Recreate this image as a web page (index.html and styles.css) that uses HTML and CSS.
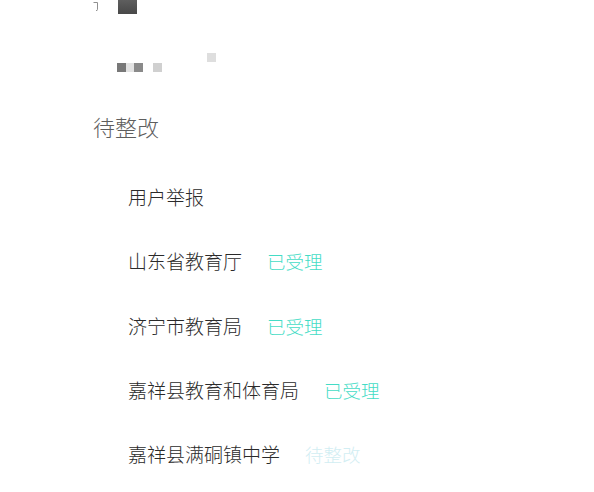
FILE: index.html
```html
<!DOCTYPE html>
<html lang="zh-CN">
<head>
<meta charset="utf-8">
<title>进度</title>
<link rel="stylesheet" href="styles.css">
</head>
<body>
<div class="page">
  <div class="head">
    <div class="head-row1">
      <svg class="cut-mark" width="8" height="12" viewBox="0 0 8 12" aria-hidden="true">
        <path d="M1.5 2.5 H5.5 V9.5 Q5.5 10.8 4 10.5" fill="none" stroke="#8f8f8f" stroke-width="1"/>
      </svg>
      <span class="mosaic m-dark"></span>
    </div>
    <div class="head-row2">
      <span class="mosaic m-a"></span>
      <span class="mosaic m-b"></span>
      <span class="mosaic m-c"></span>
      <span class="mosaic m-d"></span>
      <span class="mosaic m-e"></span>
    </div>
  </div>
  <div class="title">待整改</div>
  <ul class="list">
    <li class="item"><span class="org">用户举报</span></li>
    <li class="item"><span class="org">山东省教育厅</span><span class="status done">已受理</span></li>
    <li class="item"><span class="org">济宁市教育局</span><span class="status done">已受理</span></li>
    <li class="item"><span class="org">嘉祥县教育和体育局</span><span class="status done">已受理</span></li>
    <li class="item"><span class="org">嘉祥县满硐镇中学</span><span class="status todo">待整改</span></li>
  </ul>
</div>
</body>
</html>
```
FILE: styles.css
```css
html, body {
  margin: 0;
  padding: 0;
  background: #ffffff;
}
body {
  font-family: "Noto Sans CJK SC", "Noto Sans", sans-serif;
  font-weight: 300;
  color: #333333;
}
.page {
  width: 594px;
  height: 492px;
  overflow: hidden;
}
.head {
  height: 111px;
  display: flex;
  flex-direction: column;
}
.head-row1 {
  height: 14px;
  display: flex;
  align-items: flex-start;
  padding-left: 92px;
}
.cut-mark {
  display: block;
  margin-right: 18px;
}
.mosaic {
  display: block;
}
.m-dark {
  width: 19px;
  height: 14px;
  background: linear-gradient(#5e5e5e, #484848);
}
.head-row2 {
  margin-top: 39px;
  height: 19px;
  display: flex;
  align-items: flex-end;
  padding-left: 117px;
}
.m-a { width: 9px; height: 9px; background: #787878; }
.m-b { width: 8px; height: 9px; background: #e2e2e2; }
.m-c { width: 9px; height: 9px; background: #8a8a8a; }
.m-d { width: 9px; height: 9px; background: #d0d0d0; margin-left: 10px; }
.m-e { width: 9px; height: 9px; background: #dedede; margin-left: 45px; align-self: flex-start; }
.title {
  margin-left: 93px;
  font-size: 22px;
  line-height: 30px;
  color: #5e5e5e;
}
.list {
  list-style: none;
  margin: 24px 0 0 128px;
  padding: 0;
}
.item {
  height: 64.25px;
  line-height: 64.25px;
  font-size: 19px;
  display: flex;
  align-items: center;
}
.org {
  color: #2a2a2a;
}
.status {
  margin-left: 25px;
  font-size: 18.5px;
}
.done {
  color: #44dcc6;
}
.todo {
  color: #d2eef3;
}
```
